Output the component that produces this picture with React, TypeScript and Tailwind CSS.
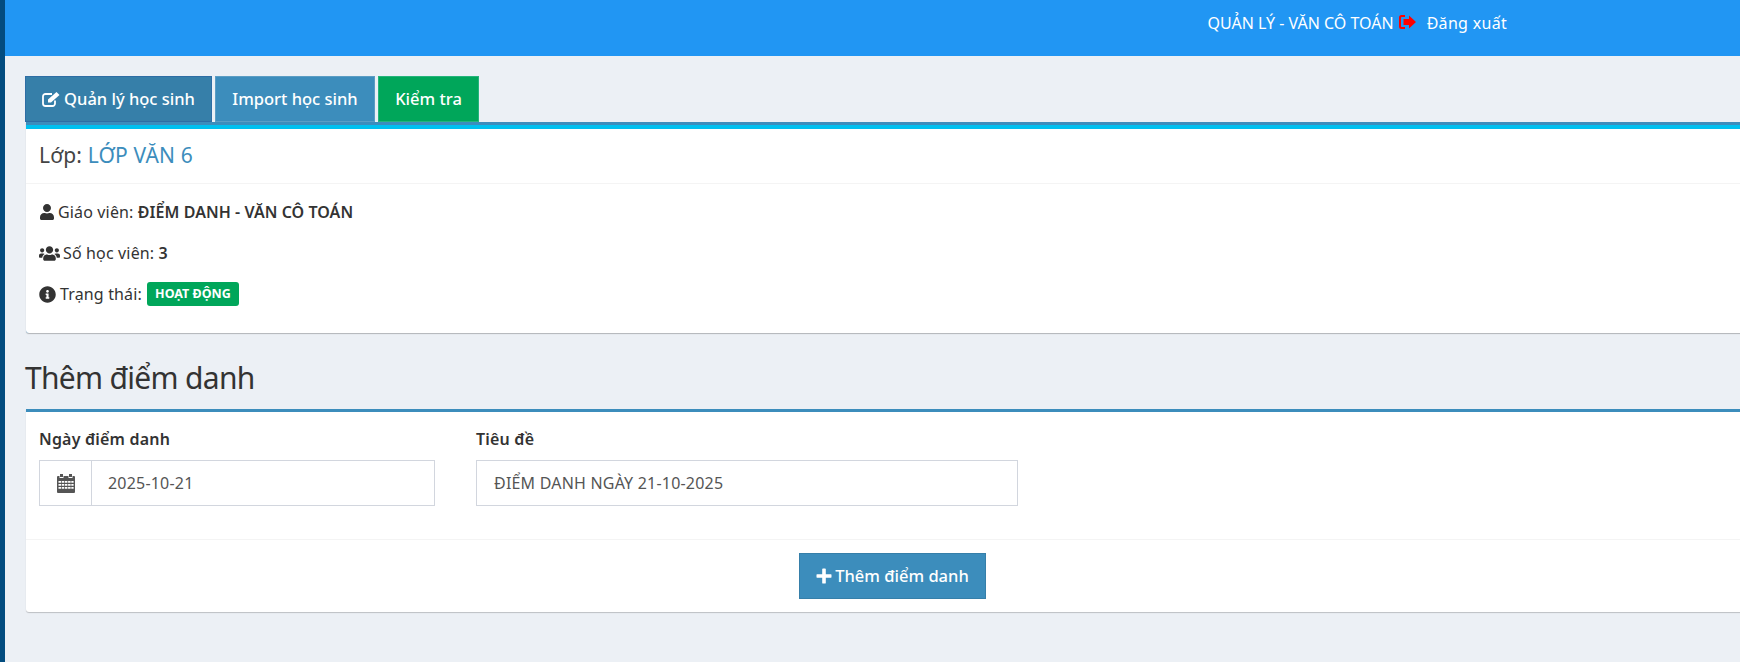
import React from 'react';
import { FaUser, FaUsers, FaInfoCircle } from 'react-icons/fa';

const CalendarIcon = () => (
  <svg viewBox="0 0 18 19" className="w-[18px] h-[19px]" fill="#555">
    <path d="M3 0h3v3H3zM12 0h3v3h-3z" />
    <path fillRule="evenodd" d="M1 2h1.500v2h4V2h5v2h4V2H17a1 1 0 0 1 1 1v15a1 1 0 0 1-1 1H1a1 1 0 0 1-1-1V3a1 1 0 0 1 1-1zM1.500 7v1.800h2.500V7zm3.200 0v1.800h2.500V7zm3.200 0v1.800h2.500V7zm3.200 0v1.800h2.500V7zm3.200 0v1.800h2.300V7zM1.500 10v1.800h2.500V10zm3.200 0v1.800h2.500V10zm3.200 0v1.800h2.500V10zm3.200 0v1.800h2.500V10zm3.200 0v1.800h2.300V10zM1.500 13v1.800h2.500V13zm3.200 0v1.800h2.500V13zm3.200 0v1.800h2.500V13zm3.200 0v1.800h2.500V13zm3.200 0v1.800h2.300V13z" />
  </svg>
);

const LogoutIcon = () => (
  <svg viewBox="0 0 17 14" className="w-[17px] h-[14px]" fill="#ff0000">
    <path d="M6 0H2.500A2.500 2.500 0 0 0 0 2.500v9A2.500 2.500 0 0 0 2.500 14H6v-2H2.700a.7.700 0 0 1-.7-.7V2.700a.7.700 0 0 1 .7-.7H6z" />
    <path d="M10 0.500 17 7l-7 6.500V10H4.500V4H10z" />
  </svg>
);

const EditIcon = () => (
  <svg viewBox="0 0 19 16" className="w-[19px] h-[16px]" fill="none" stroke="#fff">
    <path d="M13 9.500V12.500a2.500 2.500 0 0 1-2.500 2.500H3.500A2.500 2.500 0 0 1 1 12.500V5.500A2.500 2.500 0 0 1 3.500 3H10" strokeWidth="1.800" />
    <path d="M6 11.500V8.500L14.500 1l3 3L9 11.500z" fill="#fff" stroke="none" />
  </svg>
);

const PlusIcon = () => (
  <svg viewBox="0 0 16 16" className="w-[16px] h-[16px]" fill="#fff">
    <path d="M6.200 1a.8.8 0 0 1 .8-.5h2a.8.8 0 0 1 .8.500v5.200H15a.8.8 0 0 1 .5.8v2a.8.8 0 0 1-.5.800H9.800V15a.8.8 0 0 1-.8.500H7a.8.8 0 0 1-.8-.500V9.800H1a.8.8 0 0 1-.5-.800V7a.8.8 0 0 1 .5-.800h5.200z" />
  </svg>
);

const App: React.FC = () => {
  return (
    <div className="flex h-[662px] w-[1740px] overflow-hidden bg-[#ecf0f5] text-[#333] font-['Noto_Sans',sans-serif]">
      {/* sidebar edge */}
      <div className="w-[5px] shrink-0 bg-[#034c7f]"></div>

      <div className="flex-1 min-w-0">
        {/* Header */}
        <div className="h-[56px] bg-[#2196f3] flex justify-end items-start pt-[12px] pr-[233px] text-white text-[16px] leading-[22px]">
          <span>QUẢN LÝ - VĂN CÔ TOÁN</span>
          <span className="ml-[5px] mt-[3px]"><LogoutIcon /></span>
          <span className="ml-[11px] tracking-[0.3px]">Đăng xuất</span>
        </div>

        <div className="w-[1754px] pl-[20px] pt-[20px]">
          {/* Tabs */}
          <div className="flex gap-[3px] h-[46px] text-white text-[16.500px] font-medium">
            <div className="w-[187px] border border-[#2e6da4] bg-[#367fa9] flex items-center justify-center gap-[3px]"><EditIcon />Quản lý học sinh</div>
            <div className="w-[160px] border border-[#5b9dc4] bg-[#3c8dbc] flex items-center justify-center">Import học sinh</div>
            <div className="w-[101px] border border-[#25b47c] bg-[#00a65a] flex items-center justify-center">Kiểm tra</div>
          </div>

          {/* Class info */}
          <div className="bg-[#3c8dbc] pt-[3px] ml-[1px] rounded-b-[3px] shadow-[0_1px_1px_rgba(0,0,0,0.25)]">
            <div className="bg-white border-t-4 border-[#00c0ef] rounded-b-[3px]">
              <div className="h-[55px] px-[13px] flex items-center border-b border-[#f4f4f4] text-[21px] tracking-[0.15px] text-[#444]">
                Lớp:&nbsp;<span className="text-[#3c8dbc]">LỚP VĂN 6</span>
              </div>
              <div className="px-[13px] pt-[18px] pb-[29px] text-[16px] tracking-[0.15px] leading-[20px] space-y-[21px]">
                <div className="flex items-center h-[20px] gap-[3px]"><FaUser className="text-[16px]" /><span>Giáo viên: <b className="font-semibold tracking-[0.05px]">ĐIỂM DANH - VĂN CÔ TOÁN</b></span></div>
                <div className="flex items-center h-[20px] gap-[3px]"><FaUsers className="text-[21px]" /><span>Số học viên: <b className="font-semibold">3</b></span></div>
                <div className="flex items-center h-[20px] gap-[4px]">
                  <FaInfoCircle className="text-[17px]" />
                  <span>Trạng thái:</span>
                  <span className="ml-[1px] w-[92px] h-[24px] rounded-[3px] bg-[#00a65a] text-white text-[12.500px] font-bold flex items-center justify-center tracking-normal">HOẠT ĐỘNG</span>
                </div>
              </div>
            </div>
          </div>

          <h2 className="text-[30px] leading-[33px] mt-[28px] mb-[15px] tracking-[-0.7px] text-[#333]">Thêm điểm danh</h2>

          {/* Add form */}
          <div className="ml-[1px] bg-white border-t-[3px] border-[#3c8dbc] rounded-b-[3px] shadow-[0_1px_1px_rgba(0,0,0,0.2)]">
            <div className="px-[13px] pt-[17px] pb-[33px] flex gap-[41px] border-b border-[#f4f4f4]">
              <div className="w-[396px]">
                <label className="block text-[16px] font-semibold leading-[20px] mb-[11px] tracking-[0.2px]">Ngày điểm danh</label>
                <div className="flex h-[46px] border border-[#d2d6de] text-[16px] text-[#555] tracking-[0.2px]">
                  <div className="w-[52px] border-r border-[#d2d6de] flex items-center justify-center"><CalendarIcon /></div>
                  <div className="flex-1 flex items-center pl-[16px]">2025-10-21</div>
                </div>
              </div>
              <div className="w-[542px]">
                <label className="block text-[16px] font-semibold leading-[20px] mb-[11px] tracking-[0.2px]">Tiêu đề</label>
                <div className="flex h-[46px] items-center pl-[17px] border border-[#d2d6de] text-[16px] text-[#555] tracking-[0.2px]">ĐIỂM DANH NGÀY 21-10-2025</div>
              </div>
            </div>
            <div className="h-[72px] pt-[13px] flex justify-center">
              <button className="w-[187px] h-[46px] bg-[#3c8dbc] border border-[#367fa9] text-white text-[16.500px] font-medium flex items-center justify-center gap-[3px]"><PlusIcon />Thêm điểm danh</button>
            </div>
          </div>
        </div>
      </div>
    </div>
  );
};

export default App;
